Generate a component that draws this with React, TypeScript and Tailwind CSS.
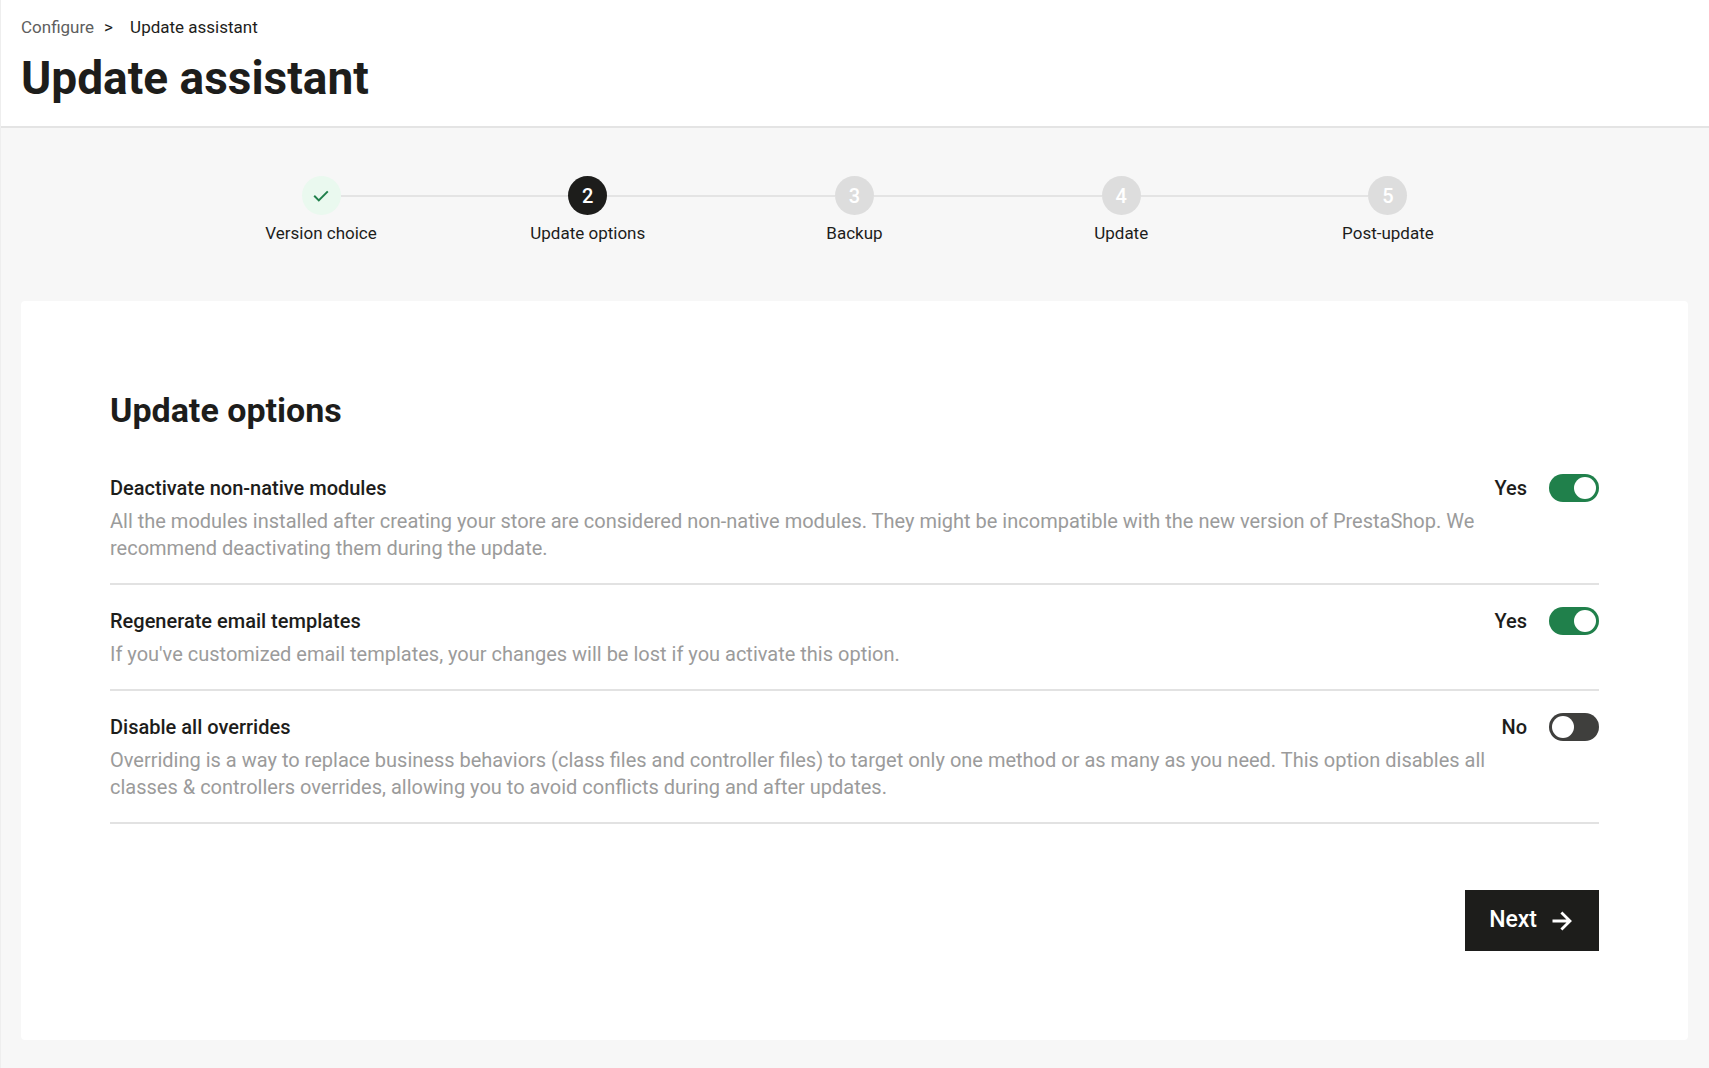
import { useState } from "react";

interface UpdateOption {
  id: string;
  title: string;
  description: string;
  enabled: boolean;
}

const steps = ["Version choice", "Update options", "Backup", "Update", "Post-update"];
const currentStep = 1;

const initialOptions: UpdateOption[] = [
  {
    id: "deactivate-modules",
    title: "Deactivate non-native modules",
    description:
      "All the modules installed after creating your store are considered non-native modules. They might be incompatible with the new version of PrestaShop. We recommend deactivating them during the update.",
    enabled: true,
  },
  {
    id: "regenerate-emails",
    title: "Regenerate email templates",
    description:
      "If you've customized email templates, your changes will be lost if you activate this option.",
    enabled: true,
  },
  {
    id: "disable-overrides",
    title: "Disable all overrides",
    description:
      "Overriding is a way to replace business behaviors (class files and controller files) to target only one method or as many as you need. This option disables all classes & controllers overrides, allowing you to avoid conflicts during and after updates.",
    enabled: false,
  },
];

function CheckIcon() {
  return (
    <svg viewBox="0 0 20 20" className="size-5" fill="none" stroke="currentColor" strokeWidth="2" aria-hidden="true">
      <path d="M3.2 9.8 7.8 14.4 16.8 5.4" />
    </svg>
  );
}

function ArrowIcon() {
  return (
    <svg viewBox="0 0 28 28" className="size-7" fill="none" stroke="currentColor" strokeWidth="2.8" aria-hidden="true">
      <path d="M5.5 14H23.5M14.4 5.4 23 14 14.4 22.6" />
    </svg>
  );
}

function Header() {
  return (
    <header className="border-b-2 border-[#e4e4e4] bg-white px-5 pt-4 pb-5">
      <nav aria-label="Breadcrumb" className="flex h-6 items-center text-[17px]">
        <a href="#configure" className="text-[#5e5e5e]">Configure</a>
        <span className="mx-2.5 w-4">&gt;</span>
        <span aria-current="page">Update assistant</span>
      </nav>
      <h1 className="mt-2.5 text-[46px] leading-14 font-bold">Update assistant</h1>
    </header>
  );
}

function StepCircle({ index }: { index: number }) {
  const base = "flex size-[39px] shrink-0 items-center justify-center rounded-full text-xl font-medium";

  if (index < currentStep) {
    return (
      <span className={`${base} bg-[#eaf9ef] text-[#20804b]`}>
        <CheckIcon />
      </span>
    );
  }
  if (index === currentStep) {
    return <span className={`${base} bg-[#1d1d1b] text-white`}>{index + 1}</span>;
  }
  return <span className={`${base} bg-[#dddddd] text-white`}>{index + 1}</span>;
}

function Stepper() {
  return (
    <ol className="mx-auto flex w-4/5 pt-12 pb-14">
      {steps.map((step, index) => (
        <li key={step} className="flex flex-1 flex-col items-center gap-1.5">
          <div className="flex w-full items-center">
            <span className={`h-0.5 flex-1 ${index > 0 ? "bg-[#e4e4e4]" : ""}`} />
            <StepCircle index={index} />
            <span className={`h-0.5 flex-1 ${index < steps.length - 1 ? "bg-[#e4e4e4]" : ""}`} />
          </div>
          <span className="text-[17px] leading-6">{step}</span>
        </li>
      ))}
    </ol>
  );
}

function OptionRow({ option, onToggle }: { option: UpdateOption; onToggle: () => void }) {
  return (
    <div className="flex items-start gap-4 border-b-2 border-[#e2e2e2] pt-[22px] pb-[21px]">
      <div className="flex flex-1 flex-col gap-1.5 text-xl leading-[27px]">
        <label htmlFor={option.id} className="leading-7 font-medium">{option.title}</label>
        <p id={`${option.id}-description`} className="text-[#9b9b9b]">{option.description}</p>
      </div>
      <div className="flex items-center gap-[22px]">
        <span className="text-xl leading-7 font-medium">{option.enabled ? "Yes" : "No"}</span>
        <input
          id={option.id}
          type="checkbox"
          role="switch"
          aria-describedby={`${option.id}-description`}
          checked={option.enabled}
          onChange={onToggle}
          className="flex h-7 w-[50px] cursor-pointer appearance-none items-center rounded-full bg-[#3f3f3d] px-[3px] before:size-[22px] before:rounded-full before:bg-white checked:justify-end checked:bg-[#20804b]"
        />
      </div>
    </div>
  );
}

export default function App() {
  const [options, setOptions] = useState(initialOptions);

  function toggleOption(id: string) {
    setOptions(options.map((o) => (o.id === id ? { ...o, enabled: !o.enabled } : o)));
  }

  return (
    <div className="min-h-screen border-l border-[#eeeeee] bg-[#f7f7f7] font-['Roboto',sans-serif] text-[#1d1d1b]">
      <Header />
      <main className="pr-[21px] pb-7 pl-5">
        <Stepper />
        <form className="rounded-sm bg-white p-[89px]" onSubmit={(e) => e.preventDefault()}>
          <h2 className="text-[34px] leading-10 font-bold">Update options</h2>
          <div className="mt-[22px]">
            {options.map((option) => (
              <OptionRow key={option.id} option={option} onToggle={() => toggleOption(option.id)} />
            ))}
          </div>
          <div className="mt-[66px] flex justify-end">
            <button
              type="submit"
              className="flex h-[61px] cursor-pointer items-center gap-2.5 bg-[#1d1d1b] px-6 text-[23px] font-medium text-white"
            >
              Next
              <ArrowIcon />
            </button>
          </div>
        </form>
      </main>
    </div>
  );
}
